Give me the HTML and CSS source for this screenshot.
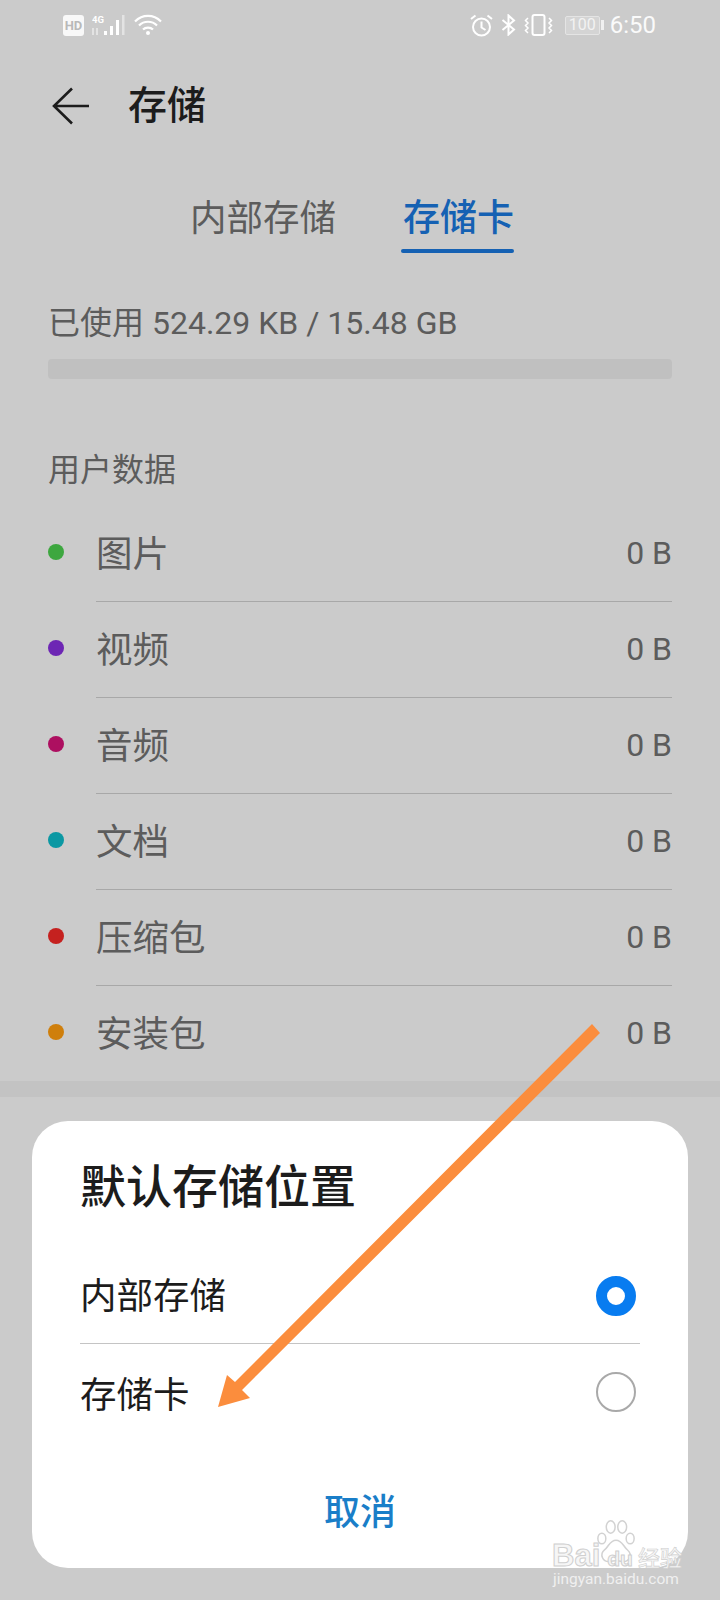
FILE: index.html
```html
<!DOCTYPE html>
<html lang="zh-CN">
<head>
<meta charset="utf-8">
<title>存储</title>
<link rel="stylesheet" href="styles.css">
</head>
<body>
<div class="screen">
  <header class="status">
    <div class="status-group">
      <span class="hd">HD</span>
      <svg class="sig" width="36" height="22" viewBox="0 0 36 22"><text x="0" y="8.5" class="sig-text">4G</text><rect x="0" y="14" width="2" height="7" class="faint"/><rect x="4" y="14" width="2" height="7" class="faint"/><rect x="12" y="17" width="3" height="4" class="on"/><rect x="18" y="12" width="3" height="9" class="on"/><rect x="24" y="6" width="3" height="15" class="on"/><rect x="30" y="1" width="2.500" height="20" class="faint"/></svg>
      <svg class="wifi" width="28" height="22" viewBox="0 0 28 22" fill="none" stroke="#fff" stroke-width="2.200"><path d="M1 7.500C8.500 0 19.500 0 27 7.500"/><path d="M5 11.500C10 6.500 18 6.500 23 11.500"/><path d="M9 15.500C11.500 13 16.500 13 19 15.500"/><circle cx="14" cy="19" r="2" fill="#fff" stroke="none"/></svg>
    </div>
    <div class="status-group right">
      <svg width="23" height="23" viewBox="0 0 23 23" fill="none" stroke="#fff" stroke-width="2"><circle cx="11.500" cy="13" r="8.500"/><path d="M11.500 7.500V13.500L15.500 16"/><path d="M1 5L5.500 1.500M22 5L17.500 1.500"/></svg>
      <svg class="bt" width="15" height="22" viewBox="0 0 15 22" fill="none" stroke="#fff" stroke-width="2"><path d="M1.500 6L13 15.500L7.500 20.500V1.500L13 6.500L1.500 16"/></svg>
      <svg class="vib" width="29" height="22" viewBox="0 0 29 22" fill="none" stroke="#fff" stroke-width="2"><rect x="8.500" y="1" width="12" height="20" rx="2"/><path d="M4 4L1.500 6.500L4 9L1.500 11.500L4 14L1.500 16.500L4 19M25 4L27.500 6.500L25 9L27.500 11.500L25 14L27.500 16.500L25 19" stroke-width="1.500"/></svg>
      <span class="batt"><span class="batt-body">100</span><span class="batt-cap"></span></span>
      <span class="time">6:50</span>
    </div>
  </header>

  <div class="appbar">
    <svg class="back" width="38" height="38" viewBox="0 0 38 38" fill="none" stroke="#1c1c1c" stroke-width="2.600"><path d="M37 19H2M20 1.500L2 19L20 36.500"/></svg>
    <h1 class="title">存储</h1>
  </div>

  <nav class="tabs">
    <span class="tab">内部存储</span>
    <span class="tab active">存储卡</span>
  </nav>

  <section class="usage">
    <p class="used">已使用 524.29 KB / 15.48 GB</p>
    <div class="bar"></div>
  </section>

  <h2 class="group">用户数据</h2>
  <ul class="list">
    <li class="row"><i class="dot d1"></i><div class="row-body"><span class="label">图片</span><span class="size">0 B</span></div></li>
    <li class="row"><i class="dot d2"></i><div class="row-body"><span class="label">视频</span><span class="size">0 B</span></div></li>
    <li class="row"><i class="dot d3"></i><div class="row-body"><span class="label">音频</span><span class="size">0 B</span></div></li>
    <li class="row"><i class="dot d4"></i><div class="row-body"><span class="label">文档</span><span class="size">0 B</span></div></li>
    <li class="row"><i class="dot d5"></i><div class="row-body"><span class="label">压缩包</span><span class="size">0 B</span></div></li>
    <li class="row last"><i class="dot d6"></i><div class="row-body"><span class="label">安装包</span><span class="size">0 B</span></div></li>
  </ul>
  <div class="band"></div>

  <div class="dialog">
    <h3 class="dlg-title">默认存储位置</h3>
    <div class="opt first"><span class="opt-label">内部存储</span><i class="radio on"></i></div>
    <div class="opt"><span class="opt-label">存储卡</span><i class="radio"></i></div>
    <div class="cancel">取消</div>
  </div>

  <svg class="arrow" width="720" height="1600" viewBox="0 0 720 1600"><path d="M592 1024L600 1033L242 1390L250 1398L218 1407L227 1375L235 1382Z" fill="#fb8d3d"/></svg>

  <div class="mark">
    <svg class="paw" width="42" height="46" viewBox="0 0 44 52" fill="none" stroke="#d2d2d2" stroke-width="1.700"><ellipse cx="6" cy="22" rx="4.500" ry="6"/><ellipse cx="16" cy="9" rx="5" ry="7"/><ellipse cx="29" cy="9" rx="5" ry="7"/><ellipse cx="38" cy="22" rx="4.500" ry="6"/><path d="M22 24C15 24 14 31 9 35C3 40 7 49 15 48C19 47 25 47 29 48C37 49 41 40 35 35C30 31 29 24 22 24Z"/></svg>
    <div class="mark-main"><span class="mark-bai">Bai</span><span class="mark-du">du</span><span class="mark-cn">经验</span></div>
    <div class="mark-url">jingyan.baidu.com</div>
  </div>
</div>
</body>
</html>
```

FILE: styles.css
```css
* { box-sizing: border-box; }
html, body { margin: 0; padding: 0; }
body { background: #cbcbcb; font-family: Roboto, "Noto Sans CJK SC", sans-serif; color: #5c5c5c; }
h1, h2, h3, p, ul { margin: 0; padding: 0; font-weight: 400; }
ul { list-style: none; }
i { display: block; font-style: normal; }

.screen { position: relative; width: 720px; height: 1600px; overflow: hidden; background: #cbcbcb; }

.status { height: 50px; padding: 14px 64px 0 63px; display: flex; justify-content: space-between; align-items: flex-start; }
.status-group { display: flex; align-items: center; height: 22px; color: #fff; }
.status-group.right { gap: 8px; }
.hd { width: 21px; height: 21px; border-radius: 3px; background: #f8f8f8; color: #b9b9b9; font: 700 13px/21px Roboto, sans-serif; text-align: center; }
.sig { margin-left: 8px; }
.sig-text { font: 700 9.500px Roboto, sans-serif; fill: #fff; }
.on { fill: #fff; }
.faint { fill: #e3e3e3; }
.wifi { margin-left: 6px; }
.vib { margin-right: 2px; }
.batt { display: flex; align-items: center; margin-left: 2px; }
.batt-body { width: 35px; height: 19px; border: 1.500px solid #e4e4e4; border-radius: 2px; color: #f2f2f2; background: #d4d4d4; font: 400 16px/16px Roboto, sans-serif; text-align: center; }
.batt-cap { width: 3px; height: 10px; margin-left: 1px; background: #f0f0f0; }
.time { font-size: 24px; line-height: 22px; color: #fafafa; margin-left: -2px; }

.appbar { height: 112px; display: flex; align-items: center; padding-left: 52px; }
.back { flex: none; }
.title { margin-left: 38px; font-size: 39px; line-height: 50px; font-weight: 500; color: #1c1c1c; }

.tabs { display: flex; justify-content: center; gap: 67px; height: 92px; padding-right: 16px; }
.tab { height: 92px; font-size: 36.500px; line-height: 114px; color: #5c5c5c; position: relative; }
.tab.active { color: #1561b3; font-weight: 500; font-size: 37px; }
.tab.active::after { content: ""; position: absolute; left: -2px; right: 0; top: 87px; height: 4px; border-radius: 2px; background: #1561b3; }

.usage { padding: 48px 48px 0; }
.used { font-size: 32px; line-height: 42px; }
.bar { height: 20px; margin-top: 15px; border-radius: 4px; background: #c0c0c0; }

.group { margin: 68px 0 0 48px; font-size: 32px; line-height: 46px; }

.list { margin-top: 13px; }
.row { display: flex; align-items: center; height: 96px; padding: 0 48px; }
.row.last { height: 95px; }
.dot { width: 16px; height: 16px; border-radius: 50%; flex: none; margin-top: -4px; }
.d1 { background: #3da73f; }
.d2 { background: #6d26b4; }
.d3 { background: #ad0f60; }
.d4 { background: #0b98a3; }
.d5 { background: #c5211f; }
.d6 { background: #cf7f0c; }
.row-body { flex: 1; height: 96px; margin-left: 32px; display: flex; justify-content: space-between; align-items: center; border-bottom: 1px solid #a8a8a8; font-size: 36.500px; }
.row.last .row-body { border-bottom: 0; }
.label { margin-top: -4px; }
.size { font-size: 32px; margin-top: -1px; }

.band { height: 16px; background: #c3c3c3; }

.dialog { position: absolute; left: 32px; top: 1121px; width: 656px; height: 447px; padding: 0 48px; border-radius: 36px; background: #fff; color: #1c1c1c; }
.dlg-title { padding-top: 33px; font-size: 46px; line-height: 66px; font-weight: 500; }
.opt { height: 96px; display: flex; justify-content: space-between; align-items: center; font-size: 36.500px; padding-right: 4px; }
.opt.first { margin-top: 28px; border-bottom: 1px solid #c4c4c4; }
.opt-label { margin-top: 0; }
.opt.first .opt-label { margin-top: -4px; }
.radio { width: 40px; height: 40px; border-radius: 50%; border: 2px solid #a9a9a9; }
.radio.on { border: 11px solid #087cf0; }
.cancel { margin-top: 49px; text-align: center; font-size: 36px; line-height: 48px; font-weight: 500; color: #1a7ec8; }

.arrow { position: absolute; left: 0; top: 0; pointer-events: none; }

.mark { position: absolute; left: 552px; top: 1520px; width: 130px; height: 70px; color: #fff; }
.paw { position: absolute; left: 43px; top: -1px; }
.mark-main { position: absolute; left: 0; top: 18px; white-space: nowrap; font: 700 31px/36px "Liberation Sans", sans-serif; color: #f6f6f6; -webkit-text-stroke: 1px #cfcfcf; }
.mark-du { font-size: 21px; margin-left: 7px; }
.mark-cn { font: 500 22px/36px "Noto Sans CJK SC", sans-serif; margin-left: 5px; -webkit-text-stroke: 0.600px #cfcfcf; }
.mark-url { position: absolute; left: 1px; top: 50px; white-space: nowrap; font: 400 15.500px/18px Roboto, sans-serif; color: #f0f0f0; }
```
